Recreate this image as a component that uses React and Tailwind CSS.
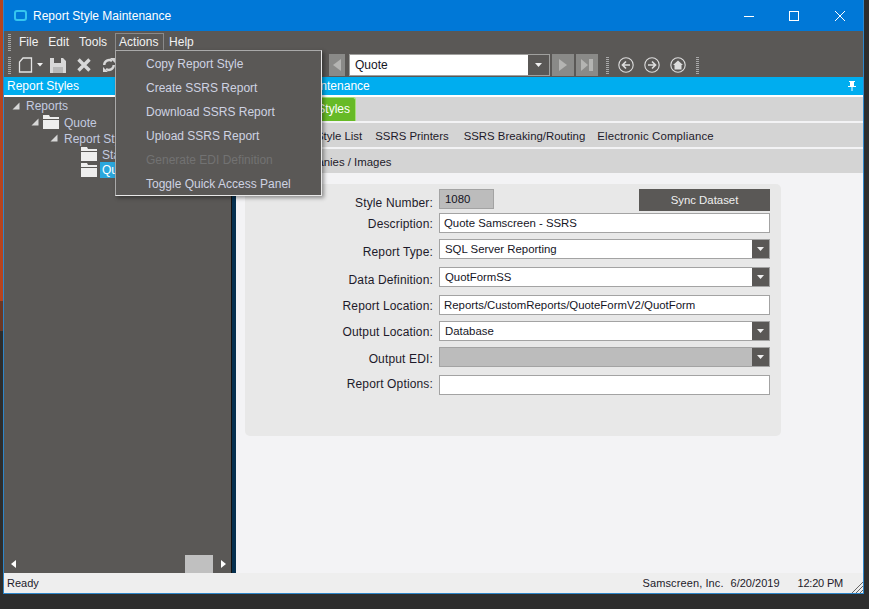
const Grip = ({ className }) => (
  <div className={`w-[3px] flex flex-col gap-[1px] ${className}`}>
    {Array.from({ length: 9 }).map((_, i) => (
      <div key={i} className="h-[1px] bg-[#a8a8a8]" />
    ))}
  </div>
);

const Caret = () => (
  <svg width="7" height="4" viewBox="0 0 7 4"><path d="M0 0h7L3.5 4z" fill="#f0f0f0" /></svg>
);

const TreeArrow = () => (
  <svg width="8" height="8" viewBox="0 0 8 8"><path d="M7.5 0.5v7h-7z" fill="#d8d8d8" /></svg>
);

const Folder = () => (
  <svg width="16" height="14" viewBox="0 0 16 14">
    <path d="M0 0h6l1 2h9v2H0z" fill="#eeeeee" />
    <rect x="0" y="5" width="16" height="9" fill="#eeeeee" />
  </svg>
);

const NavButton = ({ d, className }) => (
  <div className={`h-[22px] bg-[#8a8a88] flex items-center justify-center ${className}`}>
    <svg width="16" height="16" viewBox="0 0 16 16"><path d={d} fill="#b4b4b2" /></svg>
  </div>
);

const CircleIcon = ({ children, className }) => (
  <svg className={className} width="16" height="16" viewBox="0 0 16 16">
    <circle cx="8" cy="8" r="7.2" fill="none" stroke="#dddddd" strokeWidth="1.1" />
    {children}
  </svg>
);

const ArrowBox = () => (
  <div className="w-[21px] self-stretch bg-[#5a5856] flex items-center justify-center">
    <Caret />
  </div>
);

const FormRow = ({ label, top, labelShift = 0, children }) => (
  <div className={`flex items-stretch h-[20px] ${top}`}>
    <div className={`w-[188px] text-right text-[12px] tracking-[0.15px] text-[#1d1a2a] leading-[20px] ${labelShift}`}>{label}</div>
    <div className="ml-[6px] flex-1 flex">{children}</div>
  </div>
);

const TextBox = ({ value }) => (
  <div className="w-[331px] border border-[#a3a3a3] bg-white pl-[4px] text-[11.4px] leading-[18px] text-[#15151f]">{value}</div>
);

const ComboBox = ({ value, disabled }) => (
  <div className={`w-[331px] border border-[#a3a3a3] flex ${disabled ? 'bg-[#bcbcbc]' : 'bg-white'}`}>
    <div className="flex-1 pl-[5px] text-[11.4px] leading-[18px] text-[#15151f]">{value}</div>
    <div className="w-[17px] bg-[#5a5856] flex items-center justify-center"><Caret /></div>
  </div>
);

const menuItems = [
  { label: 'Copy Report Style' },
  { label: 'Create SSRS Report' },
  { label: 'Download SSRS Report' },
  { label: 'Upload SSRS Report' },
  { label: 'Generate EDI Definition', disabled: true },
  { label: 'Toggle Quick Access Panel' },
];

const App = () => {
  return (
    <div className="relative w-[869px] h-[609px] overflow-hidden bg-[#2d2d2d] font-['Liberation_Sans',Arial,sans-serif] flex">
      <div className="w-[3px] flex flex-col">
        <div className="h-[301px] bg-[#b5441f]" />
        <div className="h-[30px] bg-[#6a3826]" />
      </div>

      <div className="w-[861px] h-[594px] border border-t-0 border-[#2e86c9] flex flex-col bg-[#f3f3f5]">
        {/* title bar */}
        <div className="h-[31px] bg-[#0078d7] flex items-center text-white shrink-0">
          <div className="ml-[10px] w-[13px] h-[11px] rounded-[3px] border-2 border-[#35c5ef]" />
          <span className="ml-[6px] text-[12px]">Report Style Maintenance</span>
          <svg className="ml-auto" width="10" height="10" viewBox="0 0 10 10"><path d="M0 5.5h10" stroke="#fff" /></svg>
          <svg className="ml-[35px]" width="10" height="10" viewBox="0 0 10 10"><rect x="0.5" y="0.5" width="9" height="9" fill="none" stroke="#fff" /></svg>
          <svg className="ml-[36px] mr-[18px]" width="10" height="10" viewBox="0 0 10 10"><path d="M0 0l10 10M10 0L0 10" stroke="#fff" /></svg>
        </div>

        {/* menu bar */}
        <div className="h-[22px] bg-[#5a5856] flex items-center text-[12px] text-[#f2f2f2] shrink-0">
          <Grip className="ml-[4px]" />
          <span className="ml-[8px]">File</span>
          <span className="ml-[10px]">Edit</span>
          <span className="ml-[10px]">Tools</span>
          <span className="ml-[8px] border border-[#8a8a8a] border-b-white h-[19px] leading-[17px] px-[3px] w-[49px]">Actions</span>
          <span className="ml-[5px]">Help</span>
        </div>

        {/* toolbar */}
        <div className="h-[24px] bg-[#5a5856] flex items-center shrink-0">
          <Grip className="ml-[4px]" />
          <svg className="ml-[7px]" width="15" height="16" viewBox="0 0 15 16">
            <path d="M5 1h8.5v14h-12V5z" fill="none" stroke="#e4e4e4" strokeWidth="1.3" />
          </svg>
          <svg className="ml-[4px]" width="6" height="4" viewBox="0 0 6 4"><path d="M0 0h6L3 3.5z" fill="#f0f0f0" /></svg>
          <svg className="ml-[7px]" width="16" height="16" viewBox="0 0 16 16">
            <path fillRule="evenodd" d="M0 1h13l3 3v12H0zM4 1v5h7V1zM3 10v6h10v-6z" fill="#d8d8d8" />
            <rect x="3" y="10" width="10" height="6" fill="#b8b8b8" />
          </svg>
          <svg className="ml-[11px]" width="14" height="14" viewBox="0 0 14 14">
            <path d="M1.5 1.5l11 11M12.5 1.5l-11 11" stroke="#d8d8d8" strokeWidth="3.4" />
          </svg>
          <svg className="ml-[11px]" width="14" height="16" viewBox="0 0 14 16">
            <path d="M10 4A5 5 0 0 0 2.2 8M4 12a5 5 0 0 0 7.8-4" fill="none" stroke="#d8d8d8" strokeWidth="2.4" />
            <path d="M8 1l5 0v5zM6 15H1v-5z" fill="#d8d8d8" />
          </svg>
          <NavButton className="ml-[213px] w-[16px]" d="M12 2v12L4 8z" />
          <div className="ml-[4px] w-[201px] h-[22px] border border-[#a0a09e] bg-white flex">
            <div className="flex-1 pl-[5px] text-[12px] leading-[20px] text-[#15151f]">Quote</div>
            <ArrowBox />
          </div>
          <NavButton className="ml-[2px] w-[22px]" d="M4 2l8 6-8 6z" />
          <NavButton className="ml-[2px] w-[22px]" d="M2 2l7 6-7 6zM10 2h4v12h-4z" />
          <Grip className="ml-[8px]" />
          <CircleIcon className="ml-[9px]">
            <path d="M12 8H5M8 4.5L4.5 8 8 11.5" fill="none" stroke="#dddddd" strokeWidth="1.7" />
          </CircleIcon>
          <CircleIcon className="ml-[10px]">
            <path d="M4 8h7M8 4.5L11.5 8 8 11.5" fill="none" stroke="#dddddd" strokeWidth="1.7" />
          </CircleIcon>
          <CircleIcon className="ml-[10px]">
            <path d="M8 3.5L13 8h-1.5v4.5h-7V8H3z" fill="#dddddd" />
          </CircleIcon>
          <Grip className="ml-[10px]" />
        </div>

        {/* main area */}
        <div className="flex-1 flex min-h-0">
          {/* left panel */}
          <div className="w-[227px] flex flex-col bg-[#5a5856] shrink-0">
            <div className="h-[18px] bg-[#00adef] text-white text-[12px] leading-[18px] pl-[3px]">Report Styles</div>
            <div className="h-[2px] bg-white" />
            <div className="flex-1 flex flex-col text-[12px] text-[#c4cbe0]">
              <div className="h-[16px] mt-[1px] flex items-center pl-[8px] gap-[6px]"><TreeArrow /><span>Reports</span></div>
              <div className="h-[16px] flex items-center pl-[27px]"><TreeArrow /><span className="ml-[4px]"><Folder /></span><span className="ml-[5px] pt-[1px]">Quote</span></div>
              <div className="h-[16px] flex items-center pl-[46px]"><TreeArrow /><span className="ml-[6px] pt-[1px]">Report Styles</span></div>
              <div className="h-[16px] flex items-center pl-[77px]"><Folder /><span className="ml-[5px] pt-[1px]">Standard</span></div>
              <div className="h-[16px] flex items-center pl-[77px]"><Folder /><span className="ml-[3px] bg-[#2aa7dd] text-white pl-[2px] pr-[8px] leading-[16px]">Quote</span></div>
              <div className="mt-auto h-[18px] flex items-center">
                <svg className="ml-[7px]" width="6" height="8" viewBox="0 0 6 8"><path d="M5 0v8L0 4z" fill="#fff" /></svg>
                <div className="ml-[168px] w-[28px] self-stretch bg-[#c0c0c0]" />
                <svg className="ml-[7px]" width="6" height="8" viewBox="0 0 6 8"><path d="M1 0v8l5-4z" fill="#fff" /></svg>
              </div>
            </div>
          </div>

          {/* splitter */}
          <div className="w-[5px] bg-[#06304f] border-l border-[#111111] shrink-0" />

          {/* right panel */}
          <div className="flex-1 flex flex-col min-w-0">
            <div className="h-[18px] bg-[#00adef] text-white text-[12px] leading-[18px] flex pl-[35px] pr-[7px] items-center">
              <span>Style Maintenance</span>
              <svg className="ml-auto" width="8" height="10" viewBox="0 0 8 10">
                <path d="M1 0h6v1H6v4h2v1H4.5v4h-1V6H0V5h2V1H1z" fill="#fff" />
              </svg>
            </div>
            <div className="h-[2px] bg-white" />
            <div className="h-[24px] bg-[#d4d4d4] flex items-end">
              <div className="ml-[60px] w-[60px] h-[24px] bg-[#67ba26] border-t border-r border-[#a6e07a] rounded-tr-[3px] text-white text-[12px] leading-[22px] text-right pr-[5px]">Styles</div>
            </div>
            <div className="h-[2px] bg-[#f3f3f5]" />
            <div className="h-[24px] bg-[#d4d4d4] flex items-center pt-[4px] text-[11.4px] text-[#1d1a2a]">
              <span className="ml-[80px]">Style List</span>
              <span className="ml-[13px]">SSRS Printers</span>
              <span className="ml-[15px]">SSRS Breaking/Routing</span>
              <span className="ml-[12px] tracking-[0.15px]">Electronic Compliance</span>
            </div>
            <div className="h-[2px] bg-[#f3f3f5]" />
            <div className="h-[24px] bg-[#d4d4d4] flex items-center pt-[4px] text-[11.4px] text-[#1d1a2a]">
              <span className="ml-[51px]">Companies / Images</span>
            </div>

            {/* form card */}
            <div className="ml-[9px] mt-[11px] w-[536px] h-[252px] rounded-[5px] bg-[#e8e8e8] pt-[5px]">
              <div className="flex h-[22px]">
                <div className="w-[188px] text-right text-[12px] tracking-[0.15px] text-[#1d1a2a] leading-[20px] mt-[4px]">Style Number:</div>
                <div className="ml-[6px] w-[55px] h-[20px] border border-[#a3a3a3] bg-[#bcbcbc] pl-[5px] text-[11.4px] leading-[18px] text-[#15151f]">1080</div>
                <div className="ml-[145px] w-[131px] bg-[#5a5856] text-[#f0f0f0] text-[11.4px] leading-[22px] text-center">Sync Dataset</div>
              </div>
              <FormRow label="Description:" top="mt-[2px]" labelShift="mt-[1px]"><TextBox value="Quote Samscreen - SSRS" /></FormRow>
              <FormRow label="Report Type:" top="mt-[6px]" labelShift="mt-[3px]"><ComboBox value="SQL Server Reporting" /></FormRow>
              <FormRow label="Data Definition:" top="mt-[8px]" labelShift="mt-[3px]"><ComboBox value="QuotFormSS" /></FormRow>
              <FormRow label="Report Location:" top="mt-[8px]" labelShift="mt-[1px]"><TextBox value="Reports/CustomReports/QuoteFormV2/QuotForm" /></FormRow>
              <FormRow label="Output Location:" top="mt-[6px]" labelShift="mt-[1px]"><ComboBox value="Database" /></FormRow>
              <FormRow label="Output EDI:" top="mt-[6px]" labelShift="mt-[2px]"><ComboBox value="" disabled /></FormRow>
              <FormRow label="Report Options:" top="mt-[8px]" labelShift="mt-[-1px]"><TextBox value="" /></FormRow>
            </div>
          </div>
        </div>

        {/* status bar */}
        <div className="relative h-[20px] bg-[#eeeeee] flex items-center text-[11px] text-[#1d1a2a] shrink-0">
          <span className="ml-[3px]">Ready</span>
          <span className="ml-auto tracking-[0.1px]">Samscreen, Inc.</span>
          <span className="ml-[7px]">6/20/2019</span>
          <span className="ml-[18px] mr-[20px] tracking-[-0.2px]">12:20 PM</span>
          <svg className="absolute right-0 bottom-0" width="11" height="11" viewBox="0 0 11 11">
            <path d="M0 11L11 0M4 11l7-7M8 11l3-3" stroke="#666666" />
          </svg>
        </div>
      </div>

      {/* Actions dropdown */}
      <div className="absolute left-[115px] top-[50px] w-[207px] h-[146px] bg-[#5a5856] border border-[#a9a9a9] border-r-[#e8e8e8] border-b-[#e8e8e8] shadow-[2px_2px_4px_rgba(0,0,0,0.4)] flex flex-col pt-[1px]">
        {menuItems.map((item) => (
          <div
            key={item.label}
            className={`h-[24px] leading-[24px] pl-[30px] text-[12px] ${item.disabled ? 'text-[#727272]' : 'text-[#cfd3e2]'}`}
          >
            {item.label}
          </div>
        ))}
      </div>
    </div>
  );
};

export default App;
